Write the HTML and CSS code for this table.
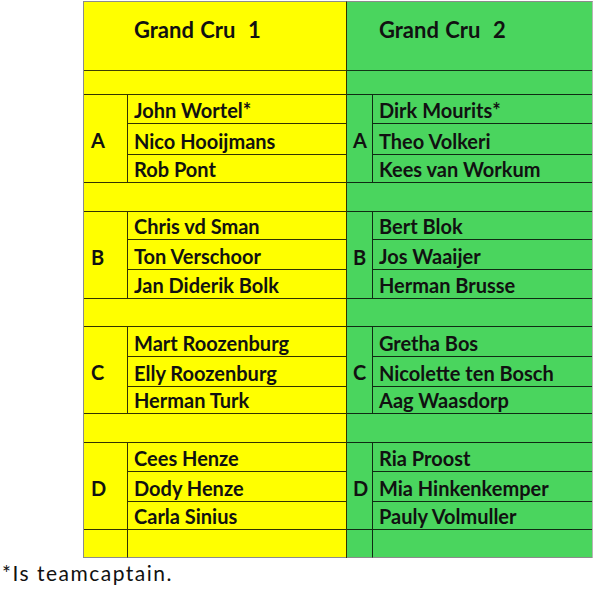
FILE: index.html
```html
<!DOCTYPE html>
<html>
<head>
<meta charset="utf-8">
<link rel="stylesheet" href="styles.css">
</head>
<body>
<div class="sheet">
  <div class="team team-yellow">
    <div class="head">Grand Cru  1</div>
    <div class="spacer"></div>
    <div class="letter l-a">A</div>
    <div class="name">John Wortel*</div>
    <div class="name">Nico Hooijmans</div>
    <div class="name">Rob Pont</div>
    <div class="spacer"></div>
    <div class="letter l-b">B</div>
    <div class="name">Chris vd Sman</div>
    <div class="name">Ton Verschoor</div>
    <div class="name">Jan Diderik Bolk</div>
    <div class="spacer"></div>
    <div class="letter l-c">C</div>
    <div class="name">Mart Roozenburg</div>
    <div class="name">Elly Roozenburg</div>
    <div class="name">Herman Turk</div>
    <div class="spacer"></div>
    <div class="letter l-d">D</div>
    <div class="name">Cees Henze</div>
    <div class="name">Dody Henze</div>
    <div class="name">Carla Sinius</div>
    <div class="end-letter"></div>
    <div class="end-name"></div>
  </div>
  <div class="team team-green">
    <div class="head">Grand Cru  2</div>
    <div class="spacer"></div>
    <div class="letter l-a">A</div>
    <div class="name">Dirk Mourits*</div>
    <div class="name">Theo Volkeri</div>
    <div class="name">Kees van Workum</div>
    <div class="spacer"></div>
    <div class="letter l-b">B</div>
    <div class="name">Bert Blok</div>
    <div class="name">Jos Waaijer</div>
    <div class="name">Herman Brusse</div>
    <div class="spacer"></div>
    <div class="letter l-c">C</div>
    <div class="name">Gretha Bos</div>
    <div class="name">Nicolette ten Bosch</div>
    <div class="name">Aag Waasdorp</div>
    <div class="spacer"></div>
    <div class="letter l-d">D</div>
    <div class="name">Ria Proost</div>
    <div class="name">Mia Hinkenkemper</div>
    <div class="name">Pauly Volmuller</div>
    <div class="end-letter"></div>
    <div class="end-name"></div>
  </div>
</div>
<p class="note">*Is teamcaptain.</p>
</body>
</html>
```

FILE: styles.css
```css
html, body {
  margin: 0;
  padding: 0;
  background: #ffffff;
}

body {
  font-family: Lato, "Open Sans", "Liberation Sans", sans-serif;
  color: #111111;
}

.sheet {
  display: flex;
  margin: 1px 0 0 83px;
  width: 510px;
}

.team {
  display: grid;
  box-sizing: border-box;
  border-top: 1px solid #8c8c8c;
  grid-template-rows: 69px 24px 29px 31px 28px 29px 28px 30px 29px 28px 30px 30px 27px 29px 29px 30px 28px 28px;
}

.team-yellow {
  background: #ffff00;
  width: 264px;
  border-left: 1px solid #8c8c8c;
  border-right: 1px solid rgba(0, 0, 0, 0.8);
  grid-template-columns: 44px 1fr;
}

.team-green {
  background: #4ad55e;
  width: 246px;
  border-right: 1px solid #b5b5b5;
  grid-template-columns: 26px 1fr;
}

.head {
  grid-column: 1 / 3;
  box-sizing: border-box;
  border-bottom: 1px solid rgba(0, 0, 0, 0.75);
  font-weight: 700;
  font-size: 22px;
  line-height: 26px;
  word-spacing: 1px;
  white-space: pre;
  padding-top: 15px;
}

.team-yellow .head {
  padding-left: 50px;
}

.team-green .head {
  padding-left: 32px;
}

.spacer {
  grid-column: 1 / 3;
  box-sizing: border-box;
  border-bottom: 1px solid rgba(0, 0, 0, 0.8);
}

.letter {
  grid-column: 1;
  grid-row: span 3;
  box-sizing: border-box;
  border-right: 1px solid rgba(0, 0, 0, 0.8);
  border-bottom: 1px solid rgba(0, 0, 0, 0.8);
  display: flex;
  align-items: center;
  font-weight: 700;
  font-size: 20px;
  padding-left: 7px;
  padding-top: 3px;
}

.team-green .letter {
  padding-left: 6px;
}

.name {
  grid-column: 2;
  box-sizing: border-box;
  border-bottom: 1px solid rgba(0, 0, 0, 0.8);
  display: flex;
  align-items: flex-end;
  font-weight: 700;
  font-size: 20px;
  line-height: 24px;
  padding-left: 6px;
  padding-bottom: 1px;
  white-space: nowrap;
}

.end-letter {
  grid-column: 1;
  box-sizing: border-box;
  border-right: 1px solid rgba(0, 0, 0, 0.8);
  border-bottom: 1px solid #8c8c8c;
}

.end-name {
  grid-column: 2;
  box-sizing: border-box;
  border-bottom: 1px solid #8c8c8c;
}

.note {
  margin: 3px 0 0 2px;
  font-size: 21px;
  line-height: 24px;
  letter-spacing: 1.5px;
  color: #111111;
}
```
